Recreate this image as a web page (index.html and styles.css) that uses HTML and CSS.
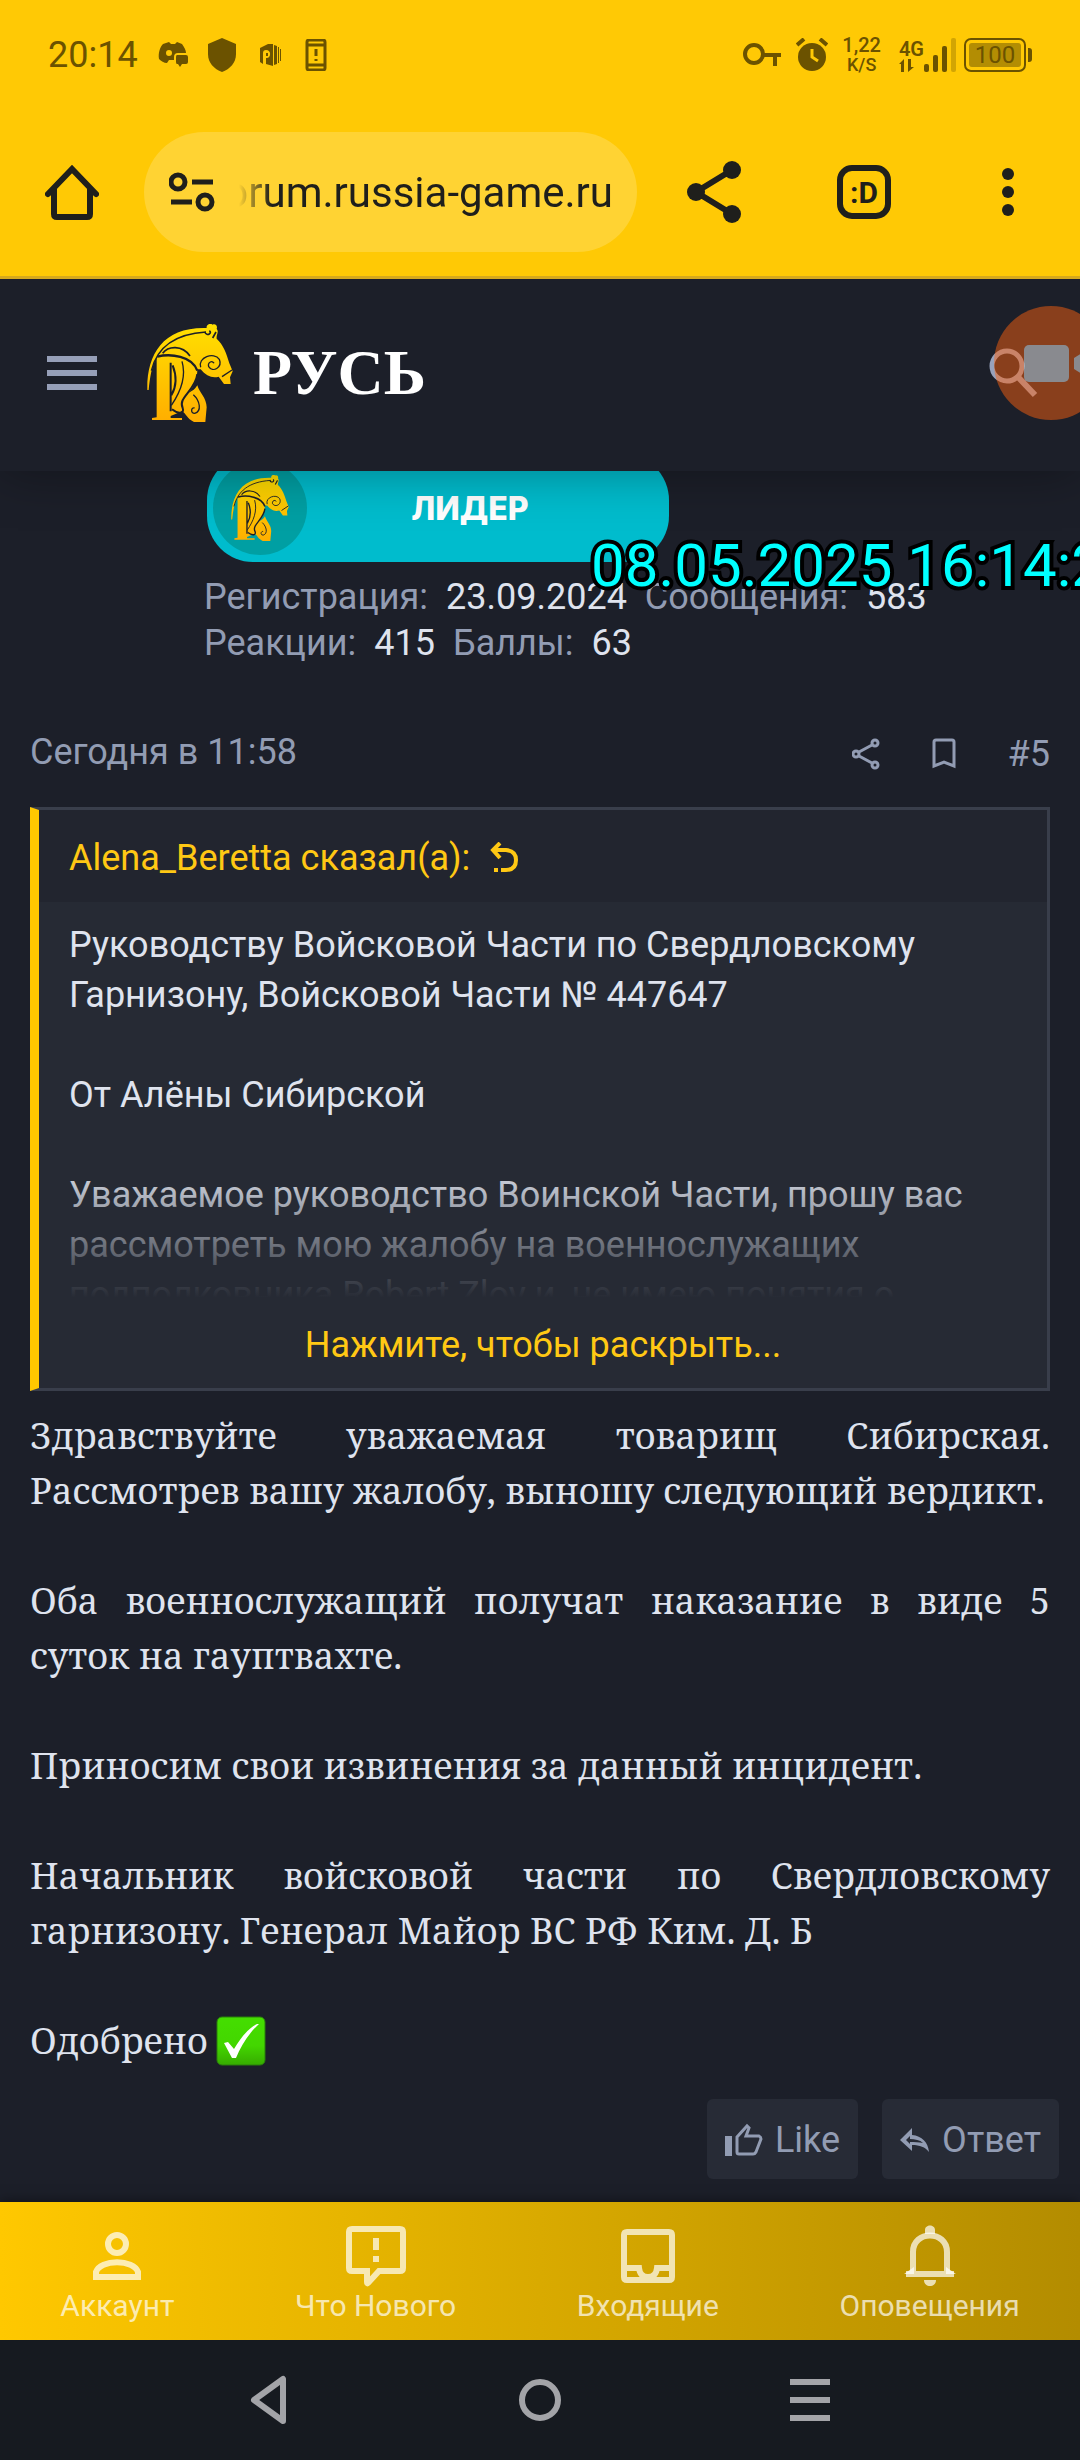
FILE: index.html
```html
<!DOCTYPE html>
<html lang="ru">
<head>
    <meta charset="UTF-8">
    <meta name="viewport" content="width=device-width, initial-scale=1.0">
    <title>Русь - Форум</title>
    <link rel="stylesheet" href="styles.css">
</head>
<body>

    <!-- horse emblem, used in the header and in the badge -->
    <svg width="0" height="0" class="defs" aria-hidden="true">
        <symbol id="horse" viewBox="0 0 256 294">
            <path d="M0 198C-2 90 48 8 178 12C176 2 188-4 196 2C202-2 212 4 208 14C216 24 206 34 208 44C228 62 238 90 246 118L256 142L248 160L250 180L230 180L214 158C196 164 176 156 160 136L150 136C150 164 140 188 124 206C140 200 146 190 150 184C156 206 178 222 178 250L174 294L140 294C118 284 118 270 104 262L70 276L70 282L104 282L104 288L14 288L14 282L28 280L28 100C12 130 8 160 4 198Z"/>
            <g class="cut">
                <path d="M12 140C28 74 76 30 176 24" stroke-width="4"/>
                <path d="M30 98C70 88 134 96 150 140" stroke-width="7"/>
                <path d="M46 88C62 66 104 62 128 96" stroke-width="5"/>
                <path d="M172 24C180 40 196 26 186 20M196 42L206 24" stroke-width="5"/>
                <path d="M160 130C150 100 200 82 216 106C226 132 196 146 184 128C180 114 196 108 200 118" stroke-width="4"/>
                <path d="M224 158L254 138" stroke-width="4"/>
                <path d="M70 116V262M76 124C90 160 86 190 72 214" stroke-width="6"/>
                <path d="M104 112C118 160 98 206 72 244" stroke-width="4"/>
                <path d="M150 150C144 200 90 222 106 252C112 268 94 272 74 256" stroke-width="6"/>
                <path d="M138 212C158 230 164 262 142 268C128 268 132 248 142 252" stroke-width="4"/>
            </g>
        </symbol>
        <linearGradient id="gold" x1="0" y1="0" x2="0" y2="1">
            <stop offset="0" stop-color="#ffe000"/>
            <stop offset="1" stop-color="#ffae00"/>
        </linearGradient>
    </svg>

    <div class="status-bar">
        <div class="status-left">
            <span class="clock">20:14</span>
            <svg width="30" height="28" viewBox="0 0 30 28"><path fill-rule="evenodd" d="M5 3L11 1L13 3H17L19 1L24 3C26 6 28 9 28 12H20Q16 12 16 16V19H11L9 22C6 22 3 20 1 18C0 12 2 6 5 3ZM11 9A3 3 0 1 0 11 15A3 3 0 1 0 11 9Z"/><path d="M19 14H28Q30 14 30 16V21Q30 23 28 23H24L22 26L20 23H19Q18 23 18 21V16Q18 14 19 14Z"/></svg>
            <svg width="28" height="34" viewBox="0 0 28 34"><path d="M14 0L28 6V16C28 25 22 31 14 34C6 31 0 25 0 16V6Z"/></svg>
            <svg width="28" height="22" viewBox="-4 0 28 22"><path fill-rule="evenodd" d="M0 4L8 0H13V22L6 20V14C11 15 12 6 6 6Q3 6 3 9V20L0 18ZM6 9H8V12H6Z"/><path d="M14 1L17 2V20L14 21ZM18 3L19 3V19L18 19ZM20 5L21 5V17L20 17Z"/></svg>
            <svg width="24" height="32" viewBox="-2 0 24 32"><path fill="none" stroke="#6b5200" stroke-width="3" d="M3 1H17Q19 1 19 3V29Q19 31 17 31H3Q1 31 1 29V3Q1 1 3 1ZM1 6H19M1 26H19M10 10V17M10 20V22"/></svg>
        </div>
        <div class="status-right">
            <svg width="40" height="24" viewBox="0 0 40 24"><path fill="none" stroke="#6b5200" stroke-width="4" d="M12 2A9 9 0 1 0 12 20A9 9 0 1 0 12 2ZM21 12H39M33 12V23"/></svg>
            <svg width="32" height="34" viewBox="0 0 32 34"><circle cx="16" cy="19" r="14"/><path d="M1 7L8 1M31 7L24 1" stroke="#6b5200" stroke-width="4"/><path d="M16 11V19L22 23" fill="none" stroke="#ffc905" stroke-width="3"/></svg>
            <div class="speed"><span>1,22</span><span class="unit">K/S</span></div>
            <div class="network">
                <div class="network-type">
                    <span>4G</span>
                    <svg width="16" height="13" viewBox="0 0 16 13"><path d="M0 5L5 0V13H2V5ZM9 0H12V8H15L9 13Z"/></svg>
                </div>
                <svg width="32" height="34" viewBox="0 0 32 34"><rect y="26" width="5" height="8" rx="2"/><rect x="9" y="17" width="5" height="17" rx="2"/><rect x="18" y="8" width="5" height="26" rx="2"/><rect x="27" width="5" height="34" rx="2" opacity=".3"/></svg>
            </div>
            <div class="battery"><span>100</span></div>
        </div>
    </div>

    <div class="toolbar">
        <button class="icon-btn" aria-label="Главная">
            <svg width="54" height="56" viewBox="0 0 54 56"><path d="M3 30L27 5L51 30M9 25V50Q9 53 12 53H42Q45 53 45 50V25" fill="none" stroke="#1f1f1c" stroke-width="6" stroke-linecap="round"/></svg>
        </button>
        <div class="address">
            <svg width="46" height="40" viewBox="0 0 46 40"><g fill="none" stroke="#1f1f1c" stroke-width="5"><circle cx="9" cy="10" r="7"/><circle cx="36" cy="30" r="7"/><path d="M23 10H44M2 30H23"/></g></svg>
            <input type="text" dir="rtl" value="forum.russia-game.ru" aria-label="Адрес" readonly>
        </div>
        <div class="toolbar-actions">
            <button class="icon-btn" aria-label="Поделиться">
                <svg width="54" height="62" viewBox="0 0 54 62"><path d="M45 9L9 31L45 53" fill="none" stroke="#1f1f1c" stroke-width="6"/><circle cx="45" cy="9" r="9"/><circle cx="9" cy="31" r="9"/><circle cx="45" cy="53" r="9"/></svg>
            </button>
            <button class="icon-btn tabs-btn" aria-label="Вкладки">:D</button>
            <button class="icon-btn" aria-label="Меню">
                <svg width="42" height="50" viewBox="0 0 42 50"><circle cx="21" cy="7" r="6"/><circle cx="21" cy="25" r="6"/><circle cx="21" cy="43" r="6"/></svg>
            </button>
        </div>
    </div>

    <header class="site-header">
        <button class="icon-btn" aria-label="Открыть меню">
            <svg width="50" height="34" viewBox="0 0 50 34"><path d="M0 3H50M0 17H50M0 31H50" stroke="#969fb8" stroke-width="6"/></svg>
        </button>
        <a href="#" class="logo">
            <svg width="86" height="98" class="horse"><use href="#horse"/></svg>
            <span>РУСЬ</span>
        </a>
        <button class="icon-btn search-btn" aria-label="Поиск">
            <svg width="50" height="50" viewBox="0 0 50 50"><g fill="none" stroke="#98a2bc"><circle cx="18" cy="18" r="15" stroke-width="5"/><path d="M29 29L46 47" stroke-width="6"/></g></svg>
        </button>
        <div class="recorder">
            <svg width="114" height="114" viewBox="0 0 114 114"><circle cx="57" cy="57" r="57" fill="#ff620e"/><rect x="30" y="39" width="45" height="37" rx="5" fill="#fff"/><path d="M80 52L98 41V74L80 63Z" fill="#fff"/></svg>
        </div>
    </header>

    <main class="post">
        <section class="user">
            <div class="badge">
                <span class="badge-icon"><svg width="58" height="66" class="horse"><use href="#horse"/></svg></span>
                <span class="badge-title">ЛИДЕР</span>
            </div>
            <dl class="stats">
                <div><dt>Регистрация:</dt><dd>23.09.2024</dd></div>
                <div><dt>Сообщения:</dt><dd>583</dd></div>
                <div><dt>Реакции:</dt><dd>415</dd></div>
                <div><dt>Баллы:</dt><dd>63</dd></div>
            </dl>
            <div class="timestamp">08.05.2025 16:14:2</div>
        </section>

        <div class="post-meta">
            <time>Сегодня в 11:58</time>
            <div class="post-links">
                <a href="#" aria-label="Поделиться"><svg width="28" height="32" viewBox="0 0 28 32"><g fill="none" stroke="#929cb3" stroke-width="3"><circle cx="23" cy="5" r="3"/><circle cx="4" cy="16" r="3"/><circle cx="23" cy="27" r="3"/><path d="M20 7L7 14M7 18L20 25"/></g></svg></a>
                <a href="#" aria-label="Закладка"><svg width="24" height="32" viewBox="0 0 24 32"><path d="M2 28V4Q2 2 4 2H20Q22 2 22 4V28L12 24Z" fill="none" stroke="#929cb3" stroke-width="3"/></svg></a>
                <a href="#">#5</a>
            </div>
        </div>

        <blockquote class="quote">
            <a href="#" class="quote-title">Alena_Beretta сказал(а):
                <svg width="28" height="32" viewBox="0 0 28 32"><path d="M10 1L3 8L10 16M3 8H16Q26 9 26 18Q26 28 16 28H11M8 28H4" fill="none" stroke="#ffc814" stroke-width="4"/></svg>
            </a>
            <div class="quote-body">
                Руководству Войсковой Части по Свердловскому Гарнизону, Войсковой Части № 447647<br><br>
                От Алёны Сибирской<br><br>
                Уважаемое руководство Воинской Части, прошу вас рассмотреть мою жалобу на военнослужащих подполковника Robert Zloy и, не имею понятия о
            </div>
            <div class="quote-expand"><a href="#">Нажмите, чтобы раскрыть...</a></div>
        </blockquote>

        <div class="message">
            <p>Здравствуйте уважаемая товарищ Сибирская. Рассмотрев вашу жалобу, выношу следующий вердикт.</p>
            <p>Оба военнослужащий получат наказание в виде 5 суток на гауптвахте.</p>
            <p>Приносим свои извинения за данный инцидент.</p>
            <p>Начальник войсковой части по Свердловскому гарнизону. Генерал Майор ВС РФ Ким. Д. Б</p>
            <p class="approved">Одобрено
                <svg width="50" height="50" viewBox="0 0 50 50">
                    <linearGradient id="green" x1="0" y1="0" x2="0" y2="1"><stop offset="0" stop-color="#44de00"/><stop offset=".6" stop-color="#43d600"/><stop offset="1" stop-color="#36ab00"/></linearGradient>
                    <rect x="1" y="1" width="48" height="48" rx="5" fill="url(#green)" stroke="#28800a"/>
                    <path d="M8 27L12 26L18 33C25 21 33 12 41 8L43 8C32 18 25 30 20 42H16Z" fill="#fff"/>
                </svg>
            </p>
        </div>

        <div class="post-actions">
            <button><svg width="38" height="34" viewBox="0 0 38 34"><path d="M0 13H7V33H0Z" fill="#929cb3"/><path d="M12 14L22 3L24 5L21 13H34Q36 14 36 16L31 29Q30 31 28 31H14Q12 31 12 29Z" fill="none" stroke="#929cb3" stroke-width="3"/></svg>Like</button>
            <button><svg width="30" height="24" viewBox="0 0 30 24"><path fill-rule="evenodd" d="M0 12L12 0V7C22 8 28 14 29 24C25 19 20 17 12 17V23ZM6 12L10 8V11C15 11 20 12 23 15C19 14 14 14 10 14V16Z" fill="#929cb3"/></svg>Ответ</button>
        </div>
    </main>

    <nav class="tab-bar">
        <a href="#">
            <svg width="72" height="64" viewBox="0 0 72 64"><g fill="none" stroke="currentColor" stroke-width="6"><circle cx="36" cy="20" r="9"/><path d="M15 53V48C19 35 53 35 57 48V53Z"/></g></svg>
            Аккаунт
        </a>
        <a href="#">
            <svg width="72" height="64" viewBox="0 0 72 64"><path d="M12 5H60Q63 5 63 8V44Q63 47 60 47H39L28 59Q27 60 27 58V47H12Q9 47 9 44V8Q9 5 12 5ZM36 14V26M36 32V38" fill="none" stroke="currentColor" stroke-width="6"/></svg>
            Что Нового
        </a>
        <a href="#">
            <svg width="72" height="64" viewBox="0 0 72 64"><path d="M15 8H57Q60 8 60 11V53Q60 56 57 56H15Q12 56 12 53V11Q12 8 15 8ZM12 44H27Q28 53 36 53Q44 53 45 44H60" fill="none" stroke="currentColor" stroke-width="6"/></svg>
            Входящие
        </a>
        <a href="#">
            <svg width="72" height="64" viewBox="0 0 72 64"><path d="M19 48V28C19 6 53 6 53 28V48M12 50H60" fill="none" stroke="currentColor" stroke-width="6"/><path d="M10 50L20 43V50ZM62 50L52 43V50ZM31 10V6C31 0 41 0 41 6V10ZM30 56H42C42 64 30 64 30 56Z" fill="currentColor"/></svg>
            Оповещения
        </a>
    </nav>

    <div class="system-nav">
        <button class="icon-btn" aria-label="Назад"><svg width="40" height="50" viewBox="0 0 40 50"><path d="M4 25L33 4V46Z" fill="none" stroke="#a3a4a8" stroke-width="6" stroke-linejoin="round"/></svg></button>
        <button class="icon-btn" aria-label="Домой"><svg width="44" height="44" viewBox="0 0 44 44"><circle cx="22" cy="22" r="18" fill="none" stroke="#a3a4a8" stroke-width="6"/></svg></button>
        <button class="icon-btn" aria-label="Недавние"><svg width="40" height="44" viewBox="0 0 40 44"><path d="M0 4H40M0 22H40M0 40H40" stroke="#a3a4a8" stroke-width="6"/></svg></button>
    </div>

</body>
</html>
```
FILE: styles.css
```css
* {
    box-sizing: border-box;
}
body {
    margin: 0;
    background-color: #1c1f29;
    color: #dfe3ee;
    font-family: Roboto, "Noto Sans", sans-serif;
    font-size: 36px;
    overflow-x: hidden;
}
a {
    color: inherit;
    text-decoration: none;
}
button {
    font-family: inherit;
    font-size: inherit;
    color: inherit;
    border: none;
    cursor: pointer;
}
svg {
    display: block;
    flex: none;
}
.defs {
    position: absolute;
}
.icon-btn {
    background: none;
    padding: 0;
}

/* status bar */
.status-bar {
    display: flex;
    justify-content: space-between;
    align-items: center;
    height: 110px;
    padding: 0 54px 0 48px;
    background-color: #ffc905;
    color: #6b5200;
    fill: #6b5200;
}
.status-left,
.status-right {
    display: flex;
    align-items: center;
}
.status-left {
    gap: 20px;
}
.status-right {
    gap: 14px;
}
.speed {
    display: flex;
    flex-direction: column;
    align-items: center;
    font-size: 20px;
    line-height: 20px;
    font-weight: 500;
}
.unit {
    font-size: 18px;
}
.network {
    display: flex;
    align-items: flex-end;
    margin: 0 -6px 0 4px;
}
.network-type {
    font-size: 20px;
    line-height: 20px;
    font-weight: 600;
}
.battery {
    position: relative;
    width: 62px;
    height: 34px;
    padding: 3px;
    border: 2px solid #6b5200;
    border-radius: 7px;
    font-size: 24px;
    line-height: 24px;
    text-align: center;
}
.battery span {
    display: block;
    border-radius: 3px;
    background-color: #b38d03;
}
.battery::after {
    content: "";
    position: absolute;
    right: -8px;
    top: 8px;
    width: 4px;
    height: 14px;
    border-radius: 0 3px 3px 0;
    background-color: #6b5200;
}

/* browser toolbar */
.toolbar {
    display: flex;
    align-items: center;
    padding: 22px 51px 24px 45px;
    background-color: #ffc905;
    border-bottom: 3px solid #d6a91c;
    color: #1f1f1c;
    fill: #1f1f1c;
}
.address {
    flex: 1;
    min-width: 0;
    display: flex;
    align-items: center;
    gap: 24px;
    height: 120px;
    margin: 0 50px 0 45px;
    padding: 0 24px 0 25px;
    border-radius: 60px;
    background-color: #ffd333;
}
.address input {
    flex: 1;
    min-width: 0;
    padding: 0;
    border: none;
    outline: none;
    background: none;
    color: inherit;
    font-family: inherit;
    font-size: 42px;
    -webkit-mask-image: linear-gradient(to right, transparent, #000 32px);
    mask-image: linear-gradient(to right, transparent, #000 32px);
}
.toolbar-actions {
    display: flex;
    align-items: center;
    gap: 96px;
}
.tabs-btn {
    width: 54px;
    height: 54px;
    border: 6px solid #1f1f1c;
    border-radius: 15px;
    font-size: 30px;
    font-weight: 700;
}

/* site header */
.site-header {
    position: relative;
    z-index: 1;
    display: flex;
    align-items: center;
    height: 192px;
    padding: 0 41px 4px 47px;
    background-color: #1c1f29;
    box-shadow: 0 0 50px rgba(0, 0, 0, 0.35);
    clip-path: inset(0 0 -60px 0);
}
.logo {
    display: flex;
    align-items: center;
    gap: 20px;
    margin-left: 50px;
    color: #fff;
    font-family: "Liberation Serif", serif;
    font-size: 64px;
    font-weight: 700;
}
.horse {
    fill: url(#gold);
    overflow: visible;
}
.cut {
    fill: none;
    stroke: #1c1f29;
}
.search-btn {
    margin-left: auto;
}
.recorder {
    position: absolute;
    right: -28px;
    top: 27px;
    opacity: 0.48;
}

/* post */
.user {
    position: relative;
    padding: 0 30px 0 204px;
}
.badge {
    display: flex;
    align-items: center;
    width: 462px;
    height: 108px;
    margin: -17px 0 0 3px;
    padding: 0 36px 0 6px;
    border-radius: 46px;
    background-color: #00bccd;
}
.badge-icon {
    display: flex;
    align-items: center;
    justify-content: center;
    width: 94px;
    height: 94px;
    border-radius: 50%;
    background-color: #009fa3;
}
.badge-title {
    flex: 1;
    text-align: center;
    color: #fff;
    font-family: Inter, sans-serif;
    font-size: 32px;
    font-weight: 800;
}
.stats {
    display: flex;
    flex-wrap: wrap;
    column-gap: 18px;
    margin: 12px 0 0;
    line-height: 46px;
}
.stats div {
    display: flex;
    gap: 18px;
}
.stats dt {
    color: #929cb3;
}
.stats dd {
    margin: 0;
}
/* recorder clock, drawn over everything and cut by the screen edge */
.timestamp {
    position: absolute;
    z-index: 2;
    top: 77px;
    left: 585px;
    right: 0;
    overflow: hidden;
    padding-left: 6px;
    color: #00ffff;
    font-size: 60px;
    line-height: 70px;
    white-space: nowrap;
    -webkit-text-stroke: 8px #000;
    paint-order: stroke fill;
}
.post-meta {
    display: flex;
    justify-content: space-between;
    align-items: center;
    height: 92px;
    margin: 40px 30px 9px;
    color: #929cb3;
}
.post-links {
    display: flex;
    align-items: center;
    gap: 52px;
    padding-top: 4px;
}
.quote {
    position: relative;
    margin: 0 30px;
    border: 3px solid #393e4b;
    border-left: 9px solid #ffc800;
    background-color: #262a34;
}
.quote-title {
    display: flex;
    align-items: center;
    gap: 20px;
    height: 92px;
    padding: 4px 30px 0;
    background-color: #22252f;
    color: #ffc814;
}
.quote-body {
    max-height: 398px;
    margin-bottom: 88px;
    padding: 18px 30px 0;
    line-height: 50px;
    overflow: hidden;
}
.quote-expand {
    position: absolute;
    left: 0;
    right: 0;
    bottom: 0;
    height: 226px;
    display: flex;
    align-items: flex-end;
    justify-content: center;
    padding-bottom: 22px;
    background: linear-gradient(to bottom, rgba(38, 42, 52, 0), #262a34 60%);
    color: #ffc814;
}
.message {
    padding: 17px 30px 0;
    font-family: "Noto Serif", "Liberation Serif", serif;
    font-size: 36px;
    line-height: 55px;
    text-align: justify;
}
.message p {
    margin: 0 0 55px;
}
.message .approved {
    display: flex;
    align-items: center;
    gap: 8px;
    margin: 0;
}
.post-actions {
    display: flex;
    justify-content: flex-end;
    gap: 24px;
    padding: 31px 21px 23px;
}
.post-actions button {
    display: flex;
    align-items: center;
    gap: 12px;
    height: 80px;
    padding: 2px 18px 0;
    border-radius: 6px;
    background-color: #272b36;
    color: #929cb3;
}

/* bottom navigation */
.tab-bar {
    display: flex;
    justify-content: space-around;
    height: 138px;
    padding-top: 22px;
    background: linear-gradient(to right, #ffc800, #b38c00);
    box-shadow: 0 0 12px rgba(0, 0, 0, 0.5);
    font-size: 30px;
    line-height: 36px;
}
.tab-bar a {
    display: flex;
    flex-direction: column;
    align-items: center;
    color: rgba(255, 255, 255, 0.7);
}
.system-nav {
    position: relative;
    display: flex;
    height: 120px;
    padding: 0 135px;
    background-color: #161a20;
}
.system-nav button {
    flex: 1;
    display: flex;
    align-items: center;
    justify-content: center;
}
```
